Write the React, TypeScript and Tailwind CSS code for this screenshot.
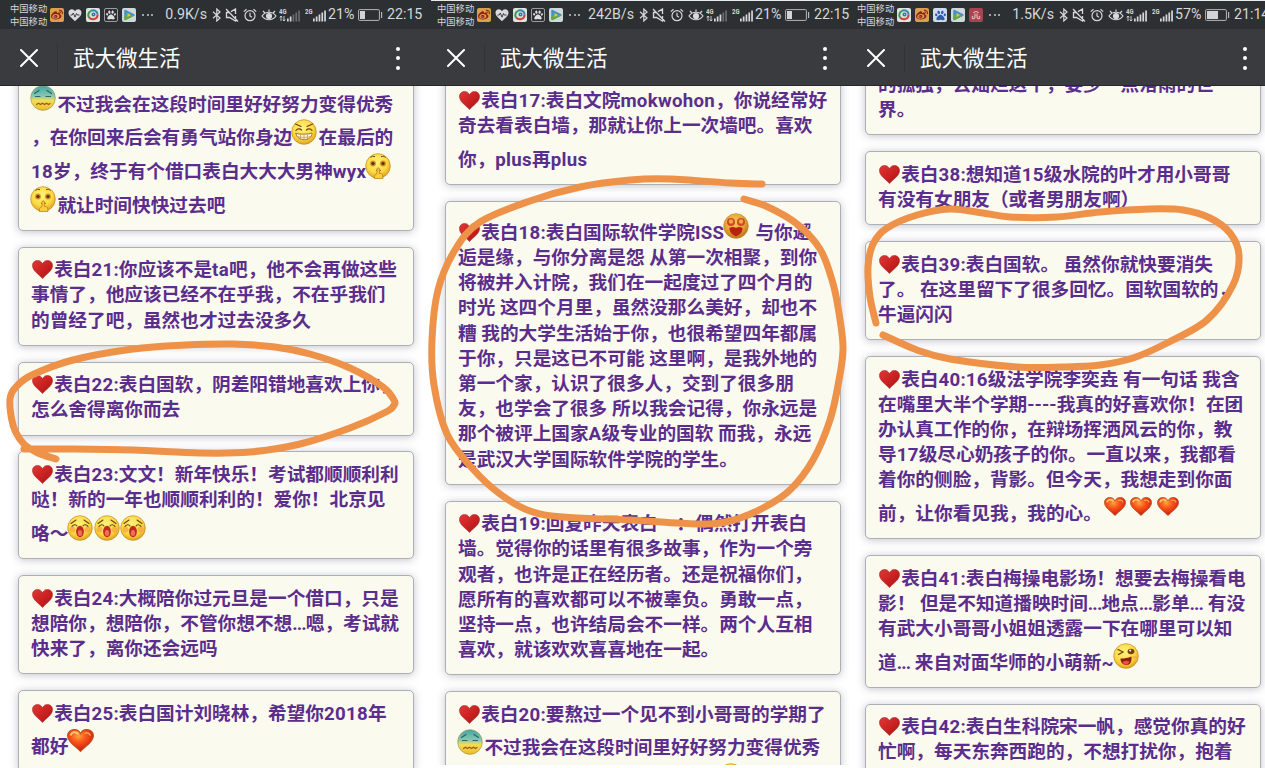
import React from "react";
import { FaWeibo, FaPaw } from "react-icons/fa";

type EmojiKind = "cold" | "grin" | "shush" | "yell" | "love" | "wink" | "glossy" | "smallGlossy";
type Part = string | { e: EmojiKind };
type Line = { tall?: boolean; heart?: boolean; parts: Part[] };

const e = (kind: EmojiKind): Part => ({ e: kind });
const line = (...parts: Part[]): Line => ({ parts });
const tall = (...parts: Part[]): Line => ({ tall: true, parts });
const first = (...parts: Part[]): Line => ({ heart: true, parts });
const firstTall = (...parts: Part[]): Line => ({ heart: true, tall: true, parts });

const card20: Line[] = [
  first("表白20:要熬过一个见不到小哥哥的学期了"),
  tall(e("cold"), "不过我会在这段时间里好好努力变得优秀"),
  tall("，在你回来后会有勇气站你身边", e("grin"), "在最后的"),
  tall("18岁，终于有个借口表白大大大男神wyx", e("shush")),
  tall(e("shush"), "就让时间快快过去吧"),
];

const leftCards: Line[][] = [
  card20.slice(1),
  [first("表白21:你应该不是ta吧，他不会再做这些"), line("事情了，他应该已经不在乎我，不在乎我们"), line("的曾经了吧，虽然也才过去没多久")],
  [first("表白22:表白国软，阴差阳错地喜欢上你，"), line("怎么舍得离你而去")],
  [
    first("表白23:文文！新年快乐！考试都顺顺利利"),
    line("哒！新的一年也顺顺利利的！爱你！北京见"),
    tall("咯～", e("yell"), e("yell"), e("yell")),
  ],
  [first("表白24:大概陪你过元旦是一个借口，只是"), line("想陪你，想陪你，不管你想不想...嗯，考试就"), line("快来了，离你还会远吗")],
  [first("表白25:表白国计刘晓林，希望你2018年"), tall("都好", e("glossy"))],
];

const middleCards: Line[][] = [
  [first("表白17:表白文院mokwohon，你说经常好"), line("奇去看表白墙，那就让你上一次墙吧。喜欢"), tall("你，plus再plus")],
  [
    firstTall("表白18:表白国际软件学院ISS", e("love"), " 与你邂"),
    line("逅是缘，与你分离是怨 从第一次相聚，到你"),
    line("将被并入计院，我们在一起度过了四个月的"),
    line("时光 这四个月里，虽然没那么美好，却也不"),
    line("糟 我的大学生活始于你，也很希望四年都属"),
    line("于你，只是这已不可能 这里啊，是我外地的"),
    line("第一个家，认识了很多人，交到了很多朋"),
    line("友，也学会了很多 所以我会记得，你永远是"),
    line("那个被评上国家A级专业的国软 而我，永远"),
    line("是武汉大学国际软件学院的学生。"),
  ],
  [
    first("表白19:回复昨天表白一：偶然打开表白"),
    line("墙。觉得你的话里有很多故事，作为一个旁"),
    line("观者，也许是正在经历者。还是祝福你们，"),
    line("愿所有的喜欢都可以不被辜负。勇敢一点，"),
    line("坚持一点，也许结局会不一样。两个人互相"),
    line("喜欢，就该欢欢喜喜地在一起。"),
  ],
  card20.slice(0, 3),
];

const rightCards: Line[][] = [
  [line("的孤独，去灿烂这个，要少一点洛雨的世"), line("界。")],
  [first("表白38:想知道15级水院的叶才用小哥哥"), line("有没有女朋友（或者男朋友啊）")],
  [first("表白39:表白国软。 虽然你就快要消失"), line("了。 在这里留下了很多回忆。国软国软的，"), line("牛逼闪闪")],
  [
    first("表白40:16级法学院李奕垚 有一句话 我含"),
    line("在嘴里大半个学期----我真的好喜欢你！在团"),
    line("办认真工作的你，在辩场挥洒风云的你，教"),
    line("导17级尽心奶孩子的你。一直以来，我都看"),
    line("着你的侧脸，背影。但今天，我想走到你面"),
    tall("前，让你看见我，我的心。", e("smallGlossy"), e("smallGlossy"), e("smallGlossy")),
  ],
  [
    first("表白41:表白梅操电影场！想要去梅操看电"),
    line("影！ 但是不知道播映时间...地点...影单... 有没"),
    line("有武大小哥哥小姐姐透露一下在哪里可以知"),
    tall("道... 来自对面华师的小萌新~", e("wink")),
  ],
  [first("表白42:表白生科院宋一帆，感觉你真的好"), line("忙啊，每天东奔西跑的，不想打扰你，抱着")],
];

type Point = [number, number];

const strokes: Point[][] = [
  [[56, 459], [38, 453], [23, 443], [13, 425], [10, 399], [17, 386], [32, 375], [73, 360], [133, 349], [185, 345], [233, 344], [275, 347], [310, 354], [350, 368], [383, 387], [394, 400], [394, 405], [386, 412], [350, 428], [300, 444], [250, 452], [200, 453], [133, 450], [67, 449], [24, 449]],
  [[762, 184], [730, 183], [670, 179], [630, 180], [580, 187], [530, 201], [480, 222], [455, 250], [438, 290], [432, 340], [434, 385], [447, 434], [472, 468], [500, 494], [530, 511], [563, 517], [630, 520], [697, 524], [730, 521], [763, 508], [790, 490], [813, 460], [830, 420], [839, 380], [843, 347], [838, 307], [832, 280], [820, 249], [797, 224], [768, 207], [744, 199]],
  [[876, 323], [870, 297], [868, 267], [873, 244], [887, 228], [917, 215], [950, 209], [983, 213], [1010, 217], [1057, 217], [1100, 212], [1150, 209], [1183, 210], [1210, 218], [1230, 233], [1239, 255], [1233, 285], [1207, 320], [1167, 343], [1133, 358], [1100, 365], [1063, 367], [1017, 367], [950, 359], [917, 350], [883, 335]],
];

function smoothPath(points: Point[]) {
  let d = `M${points[0][0]} ${points[0][1]}`;
  for (let i = 0; i < points.length - 1; i++) {
    const a = points[i - 1] ?? points[i];
    const b = points[i];
    const c = points[i + 1];
    const n = points[i + 2] ?? c;
    d += `C${b[0] + (c[0] - a[0]) / 6} ${b[1] + (c[1] - a[1]) / 6} ${c[0] - (n[0] - b[0]) / 6} ${c[1] - (n[1] - b[1]) / 6} ${c[0]} ${c[1]}`;
  }
  return d;
}

const HEART = "M13 23C9 18 1.5 14 1.5 7.5 1.5 3.5 4.5 1.5 7.5 1.5c2.500 0 4.500 1.500 5.500 4 1-2.500 3-4 5.500-4 3 0 6 2 6 6C24.500 14 17 18 13 23z";

function Defs() {
  return (
    <svg className="absolute size-0" aria-hidden="true">
      <defs>
        <radialGradient id="face" cx="45%" cy="35%" r="65%">
          <stop offset="0" stopColor="#fff27c" />
          <stop offset=".65" stopColor="#fbd944" />
          <stop offset="1" stopColor="#e0a41f" />
        </radialGradient>
        <linearGradient id="coldFace" x1="0" y1="0" x2="0" y2="1">
          <stop offset="0" stopColor="#3fa6a8" />
          <stop offset=".42" stopColor="#8ac6ae" />
          <stop offset=".6" stopColor="#f3dd58" />
          <stop offset="1" stopColor="#eebb2b" />
        </linearGradient>
        <radialGradient id="loveFace" cx="45%" cy="35%" r="65%">
          <stop offset="0" stopColor="#f7c95a" />
          <stop offset=".6" stopColor="#e9a53a" />
          <stop offset="1" stopColor="#b9731c" />
        </radialGradient>
        <radialGradient id="glossyHeart" cx="42%" cy="30%" r="65%">
          <stop offset="0" stopColor="#ffa63c" />
          <stop offset=".4" stopColor="#fb5a1c" />
          <stop offset="1" stopColor="#cf1f0c" />
        </radialGradient>
        <linearGradient id="redHeart" x1="0" y1="0" x2="1" y2="1">
          <stop offset="0" stopColor="#dc3a37" />
          <stop offset=".5" stopColor="#cb2222" />
          <stop offset="1" stopColor="#a51515" />
        </linearGradient>
      </defs>
    </svg>
  );
}

function Emoji({ kind }: { kind: EmojiKind }) {
  const dark = "#6b4310";
  if (kind === "glossy" || kind === "smallGlossy") {
    return (
      <svg
        viewBox="1 1 24 22.500"
        preserveAspectRatio="none"
        className={kind === "glossy" ? "-ml-[1px] h-[23px] w-[27px]" : "mb-[3px] ml-[2px] mr-[2.400px] h-[19px] w-[22px]"}
      >
        <path d={HEART} fill="url(#glossyHeart)" stroke="#b9521c" strokeWidth=".9" />
        <path d="M4.500 6.500c1-2.500 4-3 6-1.200" fill="none" stroke="#ffe08a" strokeWidth="2" strokeLinecap="round" opacity=".8" />
        <path d="M17 5c2-1 4 .2 4.500 2" fill="none" stroke="#ffd070" strokeWidth="1.400" strokeLinecap="round" opacity=".7" />
      </svg>
    );
  }
  const fill = kind === "cold" ? "url(#coldFace)" : kind === "love" ? "url(#loveFace)" : "url(#face)";
  return (
    <svg viewBox="0 0 26 26" className="-ml-px mr-[1.400px] size-[26px]">
      <circle cx="13" cy="13" r="12.300" fill={fill} stroke={kind === "cold" ? "#9c9a4a" : "#c48a1c"} strokeWidth=".7" />
      {kind === "cold" && (
        <g fill="none" stroke="#23666e" strokeWidth="1.200" strokeLinecap="round">
          <path d="M4.500 8.500l4.500-3M21.500 8.500l-4.500-3M5.500 11.500h4.500M16 11.500h4.500" />
          <path d="M6.500 19.500l2-1.300 2 1.300 2-1.300 2 1.300 2-1.300 2 1.300 1.500-1" stroke="#9b5b12" />
        </g>
      )}
      {kind === "grin" && (
        <g fill="none" stroke={dark} strokeWidth="1.200" strokeLinecap="round">
          <path d="M4.500 5l5.500 2.500M21.500 5l-5.500 2.500M5 11.500c1.500-2 4-2 5.500-.5M15.500 11c1.500-1.500 4-1.500 5.500.5" />
          <path d="M5 14.500c4 1 12 1 16-.5 0 8.500-15 9-16 .5z" fill="#fff8e5" stroke="#9a6a1c" strokeWidth=".9" />
          <path d="M6 17.500c4 1.200 10 1.200 14 0M9.500 15.500v4.500M13 15.500v5M16.500 15.500v4.500" stroke="#b98c48" strokeWidth=".7" />
        </g>
      )}
      {kind === "shush" && (
        <g>
          <path d="M5.500 4.500c1.500-1.500 3-1.500 4.500-.8M16 3.700c1.500-.7 3-.7 4.500.8" stroke={dark} strokeWidth="1" fill="none" />
          <circle cx="8" cy="10.500" r="2.900" fill="#d18e24" />
          <circle cx="18" cy="10.500" r="2.900" fill="#d18e24" />
          <circle cx="8" cy="10.500" r="1.600" fill="#5b2f0c" />
          <circle cx="18" cy="10.500" r="1.600" fill="#5b2f0c" />
          <path d="M11 17.500c1-.6 3-.8 5 0" stroke="#9b5b12" strokeWidth="1" fill="none" />
          <path d="M12 16c0-1.600 2.400-1.600 2.400 0v4.500c2.600-.5 3.800 1 3.400 5.200H9.500c-.5-3 .5-4.500 2.500-5.200z" fill="#f9cf3c" stroke="#b97d1c" strokeWidth=".8" />
        </g>
      )}
      {kind === "yell" && (
        <g>
          <circle cx="5.500" cy="14.500" r="3" fill="#f6a23f" opacity=".7" />
          <circle cx="20.500" cy="14.500" r="3" fill="#f6a23f" opacity=".7" />
          <path d="M4 8.500l5-3.500M22 8.500l-5-3.500M5 11.500c1-2 4-2.500 5-.5M16 11c1-2 4-1.500 5 .5" stroke={dark} strokeWidth="1.100" fill="none" strokeLinecap="round" />
          <ellipse cx="13" cy="16.500" rx="3.900" ry="5.800" fill="#c22a20" />
          <ellipse cx="13" cy="18" rx="2.200" ry="3" fill="#ef6f5c" />
        </g>
      )}
      {kind === "love" && (
        <g>
          <circle cx="8" cy="9" r="4" fill="#cf4a20" />
          <circle cx="18" cy="9" r="4" fill="#cf4a20" />
          <circle cx="8" cy="8.500" r="2.200" fill="#f3a84a" />
          <circle cx="18" cy="8.500" r="2.200" fill="#f3a84a" />
          <path d="M6.500 15c2.500-1.500 4.500-1 6.500 0 2-1 4-1.500 6.500 0 .5 4-3 7-6.500 8.500-3.500-1.500-7-4.500-6.500-8.500z" fill="#b8200f" />
        </g>
      )}
      {kind === "wink" && (
        <g>
          <path d="M5 6.500l5 2.500L5.500 11.500" stroke={dark} strokeWidth="1.300" fill="none" strokeLinecap="round" />
          <ellipse cx="18" cy="8.500" rx="3.400" ry="2.800" fill="#7a3d0c" />
          <circle cx="17.200" cy="7.500" r="1" fill="#fff" />
          <path d="M7.500 15.500c4 0 7.500-.5 11-2 .5 5-1.500 8.500-5 8.500s-6-2.500-6-6.500z" fill="#8e1b12" />
          <path d="M9.500 19c2.500-1.500 4.500-1.500 7-.5-1 2.500-2 3.200-3.500 3.200s-2.700-1-3.500-2.700z" fill="#ee4f3e" />
          <ellipse cx="21.500" cy="14" rx="2" ry="1.500" fill="#f59b3b" opacity=".6" />
        </g>
      )}
    </svg>
  );
}

function RedHeart() {
  return (
    <svg viewBox="1 1 24 22.500" className="ml-px mr-[1.200px] mt-[2px] h-[19px] w-[21px]" preserveAspectRatio="none">
      <path d={HEART} fill="url(#redHeart)" stroke="#a92020" strokeWidth=".6" />
    </svg>
  );
}

function Words({ text }: { text: string }) {
  return (
    <>
      {text.split(/([A-Za-z0-9]+|\.{3})/).map((piece, i) => {
        if (piece === "...") {
          return (
            <span key={i} className="tracking-[-0.900px]">
              {piece}
            </span>
          );
        }
        return /^[A-Za-z0-9]/.test(piece) ? (
          <span key={i} className="tracking-[0.300px]">
            {piece}
          </span>
        ) : (
          piece
        );
      })}
    </>
  );
}

function Card({ lines }: { lines: Line[] }) {
  return (
    <article className="rounded-[5px] border border-[#aab0b6] bg-[#fafaef] pt-[10.700px] pr-2 pb-[11px] pl-3 shadow-[0_1px_8px_rgba(60,60,90,0.3)]">
      {lines.map((l, i) => (
        <p key={i} className={l.tall ? "flex h-[33.600px] items-start whitespace-pre" : "flex h-[25.200px] items-start whitespace-pre"}>
          {l.heart && (
            <span className={l.tall ? "flex h-full items-start pt-[8.600px]" : "flex h-full items-start pt-[0.200px]"}>
              <RedHeart />
            </span>
          )}
          {l.parts.map((p, j) =>
            typeof p === "string" ? (
              <span key={j} className={l.tall ? "pt-[8.400px] leading-[25.200px]" : "leading-[25.200px]"}>
                <Words text={p} />
              </span>
            ) : (
              <span key={j} className="flex h-[28px] shrink-0 items-center">
                <Emoji kind={p.e} />
              </span>
            ),
          )}
        </p>
      ))}
    </article>
  );
}

type AppIcon = "weibo" | "health" | "ring" | "paw" | "bluePaw" | "play" | "car";

function StatusApp({ kind }: { kind: AppIcon }) {
  const box = "flex size-[14px] items-center justify-center rounded-[2px]";
  switch (kind) {
    case "weibo":
      return (
        <span className={box + " bg-[#dca04a]"}>
          <FaWeibo className="size-[12px] text-[#8e1f1b]" />
        </span>
      );
    case "health":
      return (
        <span className={box}>
          <svg viewBox="0 0 14 14" className="size-[14px]">
            <path d="M7 13.200C4.500 10.500.5 8.500.5 4.800.5 2.500 2 1.200 3.800 1.200c1.400 0 2.600.8 3.200 2 .6-1.200 1.800-2 3.200-2 1.800 0 3.300 1.300 3.300 3.600 0 3.700-4 5.700-6.500 8.400z" fill="#d9dbdd" />
            <path d="M2.500 7h1.700l1.100-2L7 9.200l1.500-3.700.8 1.500h2.200" stroke="#2d2f32" fill="none" strokeWidth=".9" />
          </svg>
        </span>
      );
    case "ring":
      return (
        <span className={box + " bg-[#dfe2df]"}>
          <svg viewBox="0 0 14 14" className="size-[14px]" fill="none" strokeWidth="2">
            <path d="M3 9.500A4.600 4.600 0 0 1 5 2.800" stroke="#3a9a4a" />
            <path d="M5 2.800c3-1.500 6.500.5 6.600 3.700" stroke="#2c8db5" />
            <path d="M11.600 6.500c.2 4-5 6.700-8.600 3" stroke="#cf4436" />
            <circle cx="7.500" cy="6.500" r="1.300" stroke="#3673a5" strokeWidth="1.500" />
          </svg>
        </span>
      );
    case "paw":
      return (
        <span className={box + " border border-[#9a9c9e]"}>
          <FaPaw className="size-[10px] text-[#dddfe0]" />
        </span>
      );
    case "bluePaw":
      return (
        <span className={box + " bg-[#cfdbed]"}>
          <FaPaw className="size-[11px] text-[#2f58ae]" />
        </span>
      );
    case "play":
      return (
        <span className={box + " bg-[#cfd8da]"}>
          <svg viewBox="0 0 14 14" className="size-[14px]">
            <path d="M3 2.500l9 4.500-9 4.500z" fill="#3f94c4" stroke="#3f94c4" strokeLinejoin="round" strokeWidth="1.500" />
            <path d="M3 7.500v4.300l8.500-4.300z" fill="#68a93d" stroke="#68a93d" strokeLinejoin="round" />
            <path d="M5.500 5l3.500 2-3.500 2z" fill="#e6c445" />
          </svg>
        </span>
      );
    case "car":
      return (
        <span className={box + " bg-[#a84450]"}>
          <svg viewBox="0 0 14 14" className="size-[14px]" fill="none" stroke="#e3b6b8" strokeWidth="1.200">
            <path d="M4.500 5c1-2 4-2 5 0M4 8c-1.500 1.500-.5 3 1 2.500S6 7.500 6 5.500M10 8c1.500 1.500.5 3-1 2.500S8 7.500 8 5.500" />
          </svg>
        </span>
      );
  }
}

function Signal({ label, bars, sub }: { label: string; bars: number; sub?: boolean }) {
  const heights = [3, 5, 7, 9, 11];
  return (
    <svg viewBox="0 0 22 16" className="h-4 w-[22px]">
      <text x="0" y="6.500" fontSize="7" fontWeight="700" fill="#d6d8da" fontFamily="Roboto, sans-serif" textLength="7.500" lengthAdjust="spacingAndGlyphs">
        {label}
      </text>
      {sub && <path d="M2 14V9M.8 10.500L2 9l1.200 1.500M5 9v5M3.800 12.500L5 14l1.200-1.500" stroke="#d6d8da" strokeWidth=".9" fill="none" />}
      {heights.map((h, i) => (
        <rect key={i} x={8 + i * 2.8} y={14.5 - h} width="1.700" height={h} fill={i < bars ? "#d6d8da" : "#696b6e"} />
      ))}
    </svg>
  );
}

type PhoneProps = { apps: AppIcon[]; speed: string; bars: number; percent: string; charge: number; time: string; topEdge?: boolean };

function StatusBar({ apps, speed, bars, percent, charge, time, topEdge }: PhoneProps) {
  return (
    <div className={"flex h-[29px] items-center bg-[#2d3033] pl-[10px] text-[14.200px] text-[#d6d8da] " + (topEdge ? "border-t border-[#e8e9e9]" : "pt-px")}>
      <div className="w-10 shrink-0 text-[9.300px] leading-[13.300px]">
        <div>中国移动</div>
        <div>中国移动</div>
      </div>
      <div className="flex w-[86px] shrink-0 gap-1">
        {apps.map((a) => (
          <StatusApp key={a} kind={a} />
        ))}
      </div>
      <div className="ml-[6px] flex w-[11px] shrink-0 justify-between">
        <i className="size-[2px] rounded-full bg-[#c8cacc]" />
        <i className="size-[2px] rounded-full bg-[#c8cacc]" />
        <i className="size-[2px] rounded-full bg-[#c8cacc]" />
      </div>
      <div className="w-[54px] shrink-0 whitespace-nowrap text-right">{speed}</div>
      <svg viewBox="0 0 10 14" className="ml-[5px] h-[14px] w-[10px] shrink-0" fill="none" stroke="#d6d8da" strokeWidth="1.200">
        <path d="M1 3.800l7 6.200-3.200 3V1L8 4 1 10.200" />
      </svg>
      <svg viewBox="0 0 14 14" className="ml-[3px] size-[14px] shrink-0" fill="none" stroke="#d6d8da" strokeWidth="1.300">
        <path d="M4.500 4.500H1.500v5h3l6 3.500V8M6 3.600L10.500 1v5M1 1l12 12.500" />
      </svg>
      <svg viewBox="0 0 14 14" className="ml-1 size-[14px] shrink-0" fill="none" stroke="#d6d8da" strokeWidth="1.200">
        <circle cx="7" cy="7.700" r="5" />
        <path d="M7 4.800v3.200l2 1.200M.8 3.600L3.500 1.200M13.200 3.600L10.500 1.200" />
      </svg>
      <svg viewBox="0 0 16 14" className="ml-1 h-[14px] w-4 shrink-0" fill="none" stroke="#d6d8da" strokeWidth="1.200">
        <path d="M1 8c3.500-5 10.500-5 14 0-3.500 5-10.500 5-14 0zM8 4V1.500M3.800 5L2 2.800M12.200 5L14 2.800" />
        <circle cx="8" cy="8" r="2.500" fill="#d6d8da" />
      </svg>
      <div className="ml-[2px] flex shrink-0 gap-1">
        <Signal label="4G" bars={bars} sub />
        <Signal label="2G" bars={5} />
      </div>
      <div className="ml-[1px] w-[30px] shrink-0">{percent}</div>
      <svg viewBox="0 0 25 12" className="h-3 w-[25px] shrink-0">
        <rect x=".6" y=".6" width="20.800" height="10.800" rx="1" fill="none" stroke="#b4b6b8" />
        <rect x="2" y="2" width={charge} height="8" fill="#d0d2d4" />
        <path d="M23.600 3v6" stroke="#b4b6b8" strokeWidth="1.200" />
      </svg>
      <div className="ml-1 whitespace-nowrap">{time}</div>
    </div>
  );
}

function Phone(props: PhoneProps & { children: React.ReactNode }) {
  return (
    <div className="flex h-full w-[432px] shrink-0 flex-col bg-white">
      <header className="relative z-10 shrink-0 border-b border-[#26282b]">
        <StatusBar {...props} />
        <div className="flex h-[56px] items-center bg-[#393b3f] pt-[2px] pl-[20px] text-white">
          <svg viewBox="0 0 18 18" className="size-[18px]" stroke="#fff" strokeWidth="2" strokeLinecap="round">
            <path d="M1 1l16 16M17 1L1 17" />
          </svg>
          <i className="ml-[19px] h-7 w-px bg-[#313336]" />
          <h1 className="ml-[15px] flex-1 pt-[2px] text-[21.500px] font-normal leading-8">武大微生活</h1>
          <div className="mr-[32px] flex flex-col gap-[5.500px]">
            <i className="size-1 rounded-full bg-white" />
            <i className="size-1 rounded-full bg-white" />
            <i className="size-1 rounded-full bg-white" />
          </div>
        </div>
      </header>
      <main className="min-h-0 flex-1 overflow-hidden">{props.children}</main>
    </div>
  );
}

function Feed({ cards, className }: { cards: Line[][]; className: string }) {
  return (
    <div className={"ml-[18px] flex w-[396px] flex-col gap-[15.800px] text-[18.670px] font-bold text-[#5b2d8c] " + className}>
      {cards.map((lines, i) => (
        <Card key={i} lines={lines} />
      ))}
    </div>
  );
}

export default function App() {
  return (
    <div className="relative flex h-[768px] w-[1265px] overflow-hidden bg-white font-['Roboto','Noto_Sans_CJK_SC',sans-serif]" lang="zh-CN">
      <Defs />
      <section className="h-full w-[431px] shrink-0 overflow-hidden">
        <Phone apps={["weibo", "health", "ring", "paw", "play"]} speed="0.9K/s" bars={2} percent="21%" charge={5} time="22:15">
          <Feed cards={leftCards} className="-mt-[13.300px]" />
        </Phone>
      </section>
      <section className="h-[765px] w-[424px] shrink-0 overflow-hidden">
        <div className="-ml-1 h-full">
          <Phone apps={["weibo", "health", "ring", "paw", "play"]} speed="242B/s" bars={3} percent="21%" charge={5} time="22:15" topEdge>
            <Feed cards={middleCards} className="-mt-[8.700px]" />
          </Phone>
        </div>
      </section>
      <section className="h-full min-w-0 flex-1 overflow-hidden">
        <div className="-ml-2 h-full">
          <Phone apps={["ring", "weibo", "bluePaw", "play", "car"]} speed="1.5K/s" bars={5} percent="57%" charge={11} time="21:14" topEdge>
            <Feed cards={rightCards} className="-mt-[24.900px]" />
          </Phone>
        </div>
      </section>
      <svg viewBox="0 0 1265 768" className="pointer-events-none absolute inset-0 z-20 h-[768px] w-[1265px]" fill="none" stroke="#ee924a" strokeWidth="7" strokeLinecap="round" strokeLinejoin="round">
        {strokes.map((points, i) => (
          <path key={i} d={smoothPath(points)} />
        ))}
      </svg>
    </div>
  );
}
